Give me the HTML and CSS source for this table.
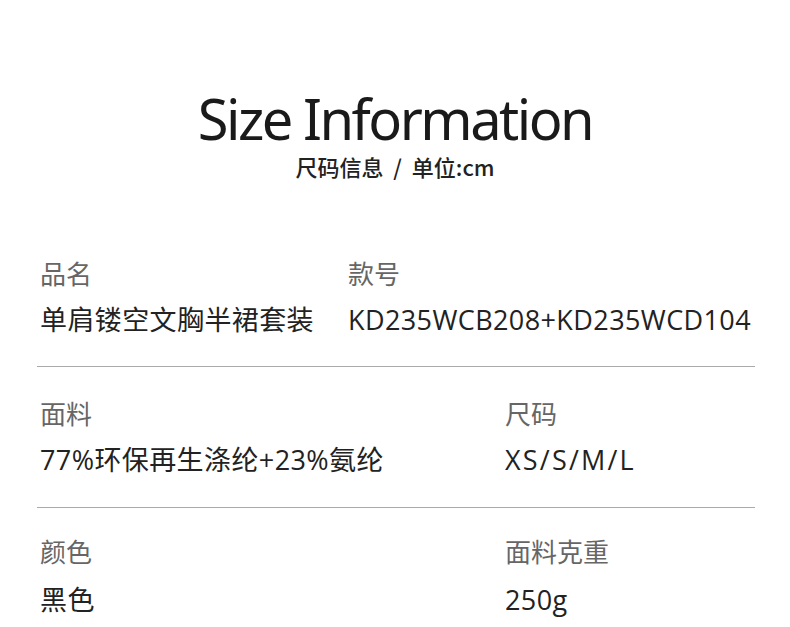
FILE: index.html
```html
<!DOCTYPE html>
<html lang="zh-CN">
<head>
<meta charset="utf-8">
<title>Size Information</title>
<link rel="stylesheet" href="styles.css">
</head>
<body>
<div class="page">
  <header class="header">
    <h1 class="title">Size Information</h1>
    <p class="subtitle">尺码信息&nbsp;&nbsp;/&nbsp;&nbsp;单位:cm</p>
  </header>
  <section class="sec sec1">
    <div class="row row-a">
      <div class="cell">
        <div class="label">品名</div>
        <div class="value">单肩镂空文胸半裙套装</div>
      </div>
      <div class="cell">
        <div class="label">款号</div>
        <div class="value">KD235WCB208+KD235WCD104</div>
      </div>
    </div>
  </section>
  <section class="sec sec2">
    <div class="row row-b">
      <div class="cell">
        <div class="label">面料</div>
        <div class="value">77%环保再生涤纶+23%氨纶</div>
      </div>
      <div class="cell">
        <div class="label">尺码</div>
        <div class="value value-wide">XS/S/M/L</div>
      </div>
    </div>
  </section>
  <section class="sec sec3">
    <div class="row row-b">
      <div class="cell">
        <div class="label">颜色</div>
        <div class="value">黑色</div>
      </div>
      <div class="cell">
        <div class="label">面料克重</div>
        <div class="value">250g</div>
      </div>
    </div>
  </section>
</div>
</body>
</html>
```
FILE: styles.css
```css
* { box-sizing: border-box; }
html, body { margin: 0; padding: 0; background: #fff; }
body { width: 790px; height: 627px; overflow: hidden; }
.page { width: 790px; }
.header {
  padding-top: 83px;
  text-align: center;
}
.title {
  margin: 0;
  font-family: "Noto Sans", sans-serif;
  font-weight: 400;
  font-size: 56px;
  line-height: 71px;
  color: #1a1a1a;
  letter-spacing: -2.5px;
}
.subtitle {
  margin: 0;
  font-family: "Noto Sans CJK SC", sans-serif;
  font-weight: 500;
  font-size: 22px;
  line-height: 24px;
  color: #222;
}
.sec {
  margin: 0 35px 0 37px;
  padding-left: 3px;
}
.sec1 { padding-top: 75px; padding-bottom: 23px; border-bottom: 1px solid #aaa; }
.sec2 { padding-top: 26px; padding-bottom: 24px; border-bottom: 1px solid #aaa; }
.sec3 { padding-top: 23px; }
.row-a { display: grid; grid-template-columns: 308px 1fr; }
.row-b { display: grid; grid-template-columns: 465px 1fr; }
.label {
  font-family: "Roboto", "Noto Sans CJK SC", sans-serif;
  font-size: 26px;
  line-height: 44px;
  color: #666;
}
.value {
  font-family: "Open Sans", "Noto Sans CJK SC", sans-serif;
  font-size: 27px;
  line-height: 46px;
  color: #222;
  letter-spacing: 0.4px;
}
.value-wide { letter-spacing: 2.2px; }
.sec3 .value { line-height: 50px; }
```
